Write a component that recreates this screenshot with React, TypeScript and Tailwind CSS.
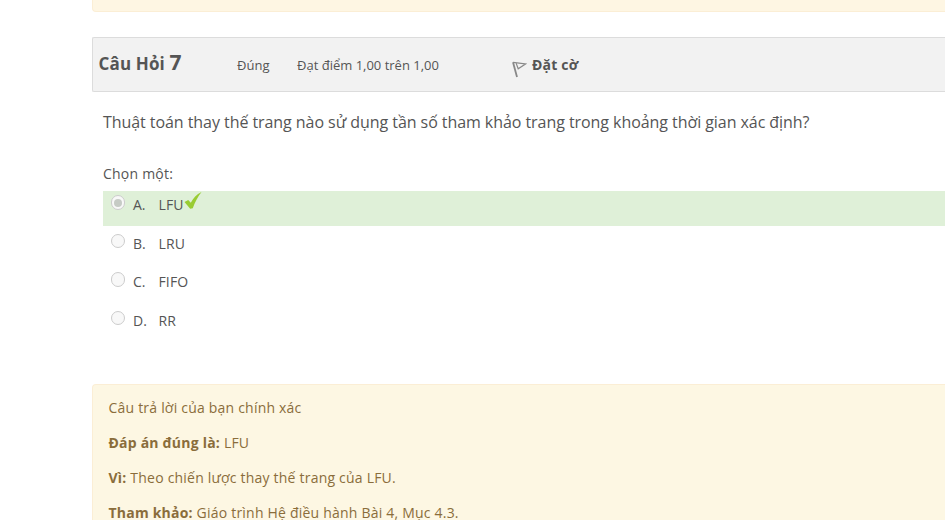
type Option = { letter: string; text: string; chosen?: boolean };

const options: Option[] = [
  { letter: "A.", text: "LFU", chosen: true },
  { letter: "B.", text: "LRU" },
  { letter: "C.", text: "FIFO" },
  { letter: "D.", text: "RR" },
];

const feedback = [
  { label: "", text: "Câu trả lời của bạn chính xác" },
  { label: "Đáp án đúng là:", text: "LFU" },
  { label: "Vì:", text: "Theo chiến lược thay thế trang của LFU." },
  { label: "Tham khảo:", text: "Giáo trình Hệ điều hành Bài 4, Mục 4.3." },
];

function Flag() {
  return (
    <svg className="mt-[23px] ml-[72.5px] h-[17px] w-[15px] shrink-0" viewBox="0 0 15 17" fill="none">
      <path d="M1 1.2L5 16" stroke="#888" strokeWidth="1.8" />
      <path d="M1 1.4L13.5 3L6.2 7.8L4.2 2.4" stroke="#888" strokeWidth="1.2" />
    </svg>
  );
}

function Check() {
  return (
    <svg className="h-[18px] w-[18px] shrink-0" viewBox="0 0 18 18">
      <path d="M0.5 11L4.2 9L6.8 11.8C9.3 7 12.4 3.6 17.5 1C13.6 6 11 11 8.8 17.3L6.2 17.7Z" fill="#99cc33" />
    </svg>
  );
}

function Radio({ chosen }: { chosen?: boolean }) {
  return (
    <span className="mt-[4.4px] ml-[7.5px] flex h-[14.5px] w-[14.5px] shrink-0 items-center justify-center rounded-full border border-[#cccccc] bg-[#f8f8f8]">
      {chosen && <span className="h-[8px] w-[8px] rounded-full bg-[#c6cbc5]" />}
    </span>
  );
}

export default function App() {
  return (
    <div className="h-[520px] w-[945px] overflow-hidden bg-white pl-[92px] font-['Open_Sans',sans-serif] text-[14px] leading-[20px] text-[#555555]">
      <div className="h-[12px] rounded-bl-[4px] border-b border-l border-[#fbeed5] bg-[#fef6e3]" />
      <div className="mt-[25px] flex h-[55px] rounded-l-[2px] border border-r-0 border-[#dcdcdc] bg-[#f2f2f2]">
        <h3 className="mt-[14px] ml-[5.5px] w-[138.5px] text-[17px] font-bold tracking-[0.15px] whitespace-nowrap">
          Câu Hỏi <span className="text-[21px]">7</span>
        </h3>
        <div className="mt-[17px] w-[60px] text-[13px]">Đúng</div>
        <div className="mt-[17px] w-[142px] text-[13px] whitespace-nowrap">Đạt điểm 1,00 trên 1,00</div>
        <Flag />
        <div className="mt-[17px] ml-[5.5px] font-bold tracking-[0.2px] whitespace-nowrap">Đặt cờ</div>
      </div>
      <div className="pl-[11px]">
        <p className="mt-[20px] text-[16px] tracking-[-0.06px] whitespace-nowrap">
          Thuật toán thay thế trang nào sử dụng tần số tham khảo trang trong khoảng thời gian xác định?
        </p>
        <p className="mt-[32px] tracking-[0.22px]">Chọn một:</p>
        <div className="mt-[7px] flex flex-col gap-[3.5px]">
          {options.map((o) => (
            <div key={o.letter} className={o.chosen ? "flex h-[35px] bg-[#dff0d8]" : "flex h-[35px]"}>
              <Radio chosen={o.chosen} />
              <span className="mt-[4px] ml-[8px] w-[25.4px]">{o.letter}</span>
              <span className="mt-[4px] tracking-[0.2px]">{o.text}</span>
              {o.chosen && <Check />}
            </div>
          ))}
        </div>
      </div>
      <div className="mt-[42.5px] flex h-[200px] flex-col gap-[15px] rounded-tl-[4px] border-t border-l border-[#fbeed5] bg-[#fdf7e3] pt-[13px] pl-[15.5px] tracking-[0.21px] text-[#8a6d3b]">
        {feedback.map((f) => (
          <p key={f.text} className="whitespace-nowrap">
            {f.label && <b>{f.label} </b>}
            {f.text}
          </p>
        ))}
      </div>
    </div>
  );
}
